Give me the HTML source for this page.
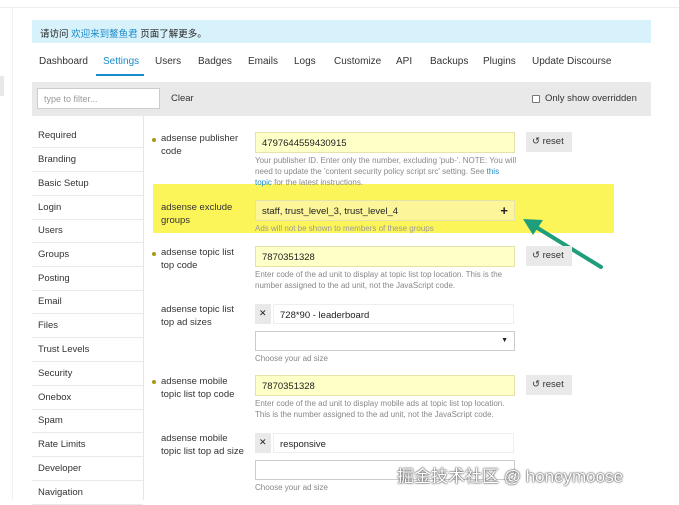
<!DOCTYPE html>
<html><head><meta charset="utf-8"><style>
*{margin:0;padding:0;box-sizing:border-box}
body{width:679px;height:500px;overflow:hidden;background:#fff;font-family:"Liberation Sans","Noto Sans CJK SC",sans-serif;color:#222;position:relative;font-size:10px}
.a{position:absolute;white-space:nowrap}
.w{white-space:normal}
.side div{position:absolute;left:32px;width:111px;height:24px;border-bottom:1px solid #e9e9e9;padding:6px 0 0 6px;font-size:9.5px;color:#333}
.lbl{font-size:9.5px;color:#333;line-height:13px}
.dot{width:4px;height:4px;border-radius:50%;background:#a89a1a}
.inp{border:1px solid #ddd;height:21px;font-size:9.5px;padding:5px 0 0 6px;color:#222}
.y{background:#ffffc8;border-color:#e6e3a8}
.hint{font-size:8px;color:#888;line-height:11px;white-space:normal}
.btn{background:#e9e9e9;height:20px;width:46px;font-size:9.5px;padding:4px 0 0 6px;color:#333}
</style></head><body>
<div class="a" style="left:0;top:7px;width:679px;height:1px;background:#eee"></div>
<div class="a" style="left:12px;top:8px;width:1px;height:492px;background:#f0f0f0"></div>
<div class="a" style="left:0;top:76px;width:4px;height:20px;background:#e8e8e8"></div>
<div class="a" style="left:32px;top:20px;width:619px;height:23px;background:#d8f2fc;font-size:9.5px;padding:6px 0 0 8px">请访问 <span style="color:#1a8bc9">欢迎来到鳌鱼君</span> 页面了解更多。</div>
<div class="a" style="top:56px;left:39px;font-size:10px;color:#333">
<span class="a" style="left:0">Dashboard</span><span class="a" style="left:64px;color:#1a8bc9">Settings</span><span class="a" style="left:116px">Users</span><span class="a" style="left:159px">Badges</span><span class="a" style="left:209px">Emails</span><span class="a" style="left:255px">Logs</span><span class="a" style="left:295px">Customize</span><span class="a" style="left:357px">API</span><span class="a" style="left:391px">Backups</span><span class="a" style="left:444px">Plugins</span><span class="a" style="left:493px">Update Discourse</span></div>
<div class="a" style="left:96px;top:74px;width:48px;height:2px;background:#1a8bc9"></div>
<div class="a" style="left:32px;top:82px;width:619px;height:34px;background:#e9e9e9"></div>
<div class="a" style="left:37px;top:88px;width:123px;height:21px;background:#fff;border:1px solid #ccc;font-size:9px;color:#999;padding:5px 0 0 6px">type to filter...</div>
<div class="a" style="left:171px;top:93px;font-size:9.5px;color:#333">Clear</div>
<div class="a" style="left:532px;top:95px;width:8px;height:8px;border:1px solid #777;border-radius:1px;background:#fff"></div>
<div class="a" style="left:545px;top:93px;font-size:9.5px;color:#333">Only show overridden</div>
<div class="a" style="left:143px;top:116px;width:1px;height:384px;background:#e6e6e6"></div>
<div class="side">
<div style="top:124px">Required</div><div style="top:148px">Branding</div><div style="top:172px">Basic Setup</div><div style="top:196px">Login</div><div style="top:219px">Users</div><div style="top:243px">Groups</div><div style="top:267px">Posting</div><div style="top:290px">Email</div><div style="top:314px">Files</div><div style="top:338px">Trust Levels</div><div style="top:362px">Security</div><div style="top:386px">Onebox</div><div style="top:409px">Spam</div><div style="top:433px">Rate Limits</div><div style="top:457px">Developer</div><div style="top:481px">Navigation</div>
</div>
<div class="a" style="left:153px;top:184px;width:461px;height:49px;background:#fcf55a"></div>
<div class="a dot" style="left:152px;top:138px"></div>
<div class="a lbl" style="left:161px;top:132px">adsense publisher<br>code</div>
<div class="a inp y" style="left:255px;top:132px;width:260px">4797644559430915</div>
<div class="a btn" style="left:526px;top:132px">↺ reset</div>
<div class="a hint" style="left:255px;top:155px;width:262px">Your publisher ID. Enter only the number, excluding 'pub-'. NOTE: You will need to update the 'content security policy script src' setting. See <span style="color:#1a8bc9">this topic</span> for the latest instructions.</div>
<div class="a lbl" style="left:161px;top:201px">adsense exclude<br>groups</div>
<div class="a inp y" style="left:255px;top:200px;width:260px;background:#fcf59a">staff, trust_level_3, trust_level_4<span class="a" style="right:6px;top:2px;font-size:13px;font-weight:bold">+</span></div>
<div class="a hint" style="left:255px;top:223px;color:#999;white-space:nowrap">Ads will not be shown to members of these groups</div>
<svg class="a" style="left:515px;top:210px" width="95" height="65"><line x1="86" y1="57" x2="16" y2="14" stroke="#1e9e7a" stroke-width="4" stroke-linecap="round"/><polygon points="8,9 28,10 18,25" fill="#1e9e7a"/></svg>
<div class="a dot" style="left:152px;top:252px"></div>
<div class="a lbl" style="left:161px;top:246px">adsense topic list<br>top code</div>
<div class="a inp y" style="left:255px;top:246px;width:260px">7870351328</div>
<div class="a btn" style="left:526px;top:246px">↺ reset</div>
<div class="a hint" style="left:255px;top:269px;width:262px">Enter code of the ad unit to display at topic list top location. This is the number assigned to the ad unit, not the JavaScript code.</div>
<div class="a lbl" style="left:161px;top:303px">adsense topic list<br>top ad sizes</div>
<div class="a" style="left:255px;top:304px;width:16px;height:20px;background:#e9e9e9;font-size:9px;padding:4px 0 0 4px">✕</div>
<div class="a inp" style="left:273px;top:304px;width:241px;height:20px;border-color:#eee">728*90 - leaderboard</div>
<div class="a inp" style="left:255px;top:331px;width:260px;height:20px;border-color:#ccc"><span class="a" style="right:6px;top:5px;font-size:7px">▼</span></div>
<div class="a hint" style="left:255px;top:353px">Choose your ad size</div>
<div class="a dot" style="left:152px;top:380px"></div>
<div class="a lbl" style="left:161px;top:375px">adsense mobile<br>topic list top code</div>
<div class="a inp y" style="left:255px;top:375px;width:260px">7870351328</div>
<div class="a btn" style="left:526px;top:375px">↺ reset</div>
<div class="a hint" style="left:255px;top:398px;width:265px">Enter code of the ad unit to display mobile ads at topic list top location. This is the number assigned to the ad unit, not the JavaScript code.</div>
<div class="a lbl" style="left:161px;top:432px">adsense mobile<br>topic list top ad size</div>
<div class="a" style="left:255px;top:433px;width:16px;height:20px;background:#e9e9e9;font-size:9px;padding:4px 0 0 4px">✕</div>
<div class="a inp" style="left:273px;top:433px;width:241px;height:20px;border-color:#eee">responsive</div>
<div class="a inp" style="left:255px;top:460px;width:260px;height:20px;border-color:#ccc"></div>
<div class="a hint" style="left:255px;top:482px">Choose your ad size</div>
<div class="a" style="left:397px;top:462px;font-size:17px;color:#fff;text-shadow:0 0 2px #444,0 0 1px #222">掘金技术社区 @ honeymoose</div>
</body></html>
